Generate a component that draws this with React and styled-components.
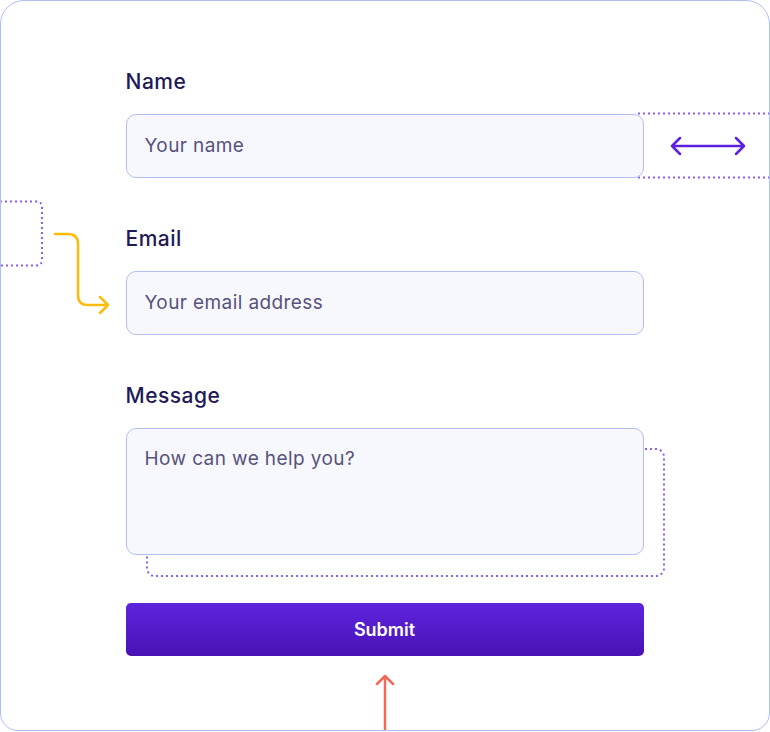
import React from 'react';
import styled, { createGlobalStyle } from 'styled-components';

const GlobalStyle = createGlobalStyle`
	html, body {
		margin: 0;
		padding: 0;
		background: #ffffff;
	}
	* {
		box-sizing: border-box;
	}
`;

const Card = styled.div`
	position: relative;
	width: 770px;
	height: 731px;
	border: 1.5px solid #b0bdf4;
	border-radius: 24px 24px 18px 18px;
	overflow: hidden;
	background: #ffffff;
	padding: 68.5px 0 0 124.5px;
	font-family: Inter, "Liberation Sans", sans-serif;
`;

const Decorations = styled.svg`
	position: absolute;
	top: -1.5px;
	left: -1.5px;
	width: 770px;
	height: 731px;
	pointer-events: none;
	z-index: 0;
`;

const Form = styled.form`
	position: relative;
	z-index: 1;
	width: 518px;
	display: flex;
	flex-direction: column;
`;

const Field = styled.div`
	display: flex;
	flex-direction: column;
	gap: 20px;
	margin-bottom: ${props => props.last ? '48px' : '49px'};
`;

const Label = styled.label`
	font-size: 21px;
	line-height: 24px;
	font-weight: 500;
	color: #221a57;
	letter-spacing: 0.5px;
`;

const fieldStyle = `
	width: 100%;
	border: 1.5px solid #b2bef4;
	border-radius: 10px;
	background: #f7f8fe;
	font-family: Inter, "Liberation Sans", sans-serif;
	font-size: 19px;
	letter-spacing: 0.4px;
	color: #221a57;
	outline: none;
	&::placeholder {
		color: #57527c;
		opacity: 1;
	}
`;

const Input = styled.input`
	${fieldStyle}
	height: 64px;
	padding: 0 18px;
`;

const TextArea = styled.textarea`
	${fieldStyle}
	height: 127px;
	padding: 18px 18px;
	line-height: 24px;
	resize: none;
	display: block;
`;

const SubmitButton = styled.button`
	width: 100%;
	height: 53px;
	border: none;
	border-radius: 5px;
	background: linear-gradient(180deg, #5e24de 0%, #4812b5 100%);
	color: #ffffff;
	font-family: Inter, "Liberation Sans", sans-serif;
	font-size: 18px;
	font-weight: 600;
	cursor: pointer;
`;

const DOTS = '2 3';
const DOT_COLOR = '#8a5ff0';

const App = () => {
	return (
		<>
			<GlobalStyle />
			<Card>
				<Decorations viewBox="0 0 770 731">
					{/* dotted guide right of the name field */}
					<path d="M638 113.5 H770 M638 177.5 H770" fill="none" stroke={DOT_COLOR} strokeWidth="2" strokeDasharray={DOTS} />
					{/* width arrow */}
					<path d="M672 146 H744 M680 138 L672 146 L680 154 M736 138 L744 146 L736 154" fill="none" stroke="#5b21db" strokeWidth="2.5" strokeLinecap="round" strokeLinejoin="round" />
					{/* dotted box on the left */}
					<path d="M0 201.5 H36 Q42 201.5 42 207.5 V259.5 Q42 265.5 36 265.5 H0" fill="none" stroke={DOT_COLOR} strokeWidth="2" strokeDasharray={DOTS} />
					{/* yellow arrow into email */}
					<path d="M55 234 H68 Q78 234 78 244 V295 Q78 305 88 305 H108 M100 297 L108 305 L100 313" fill="none" stroke="#fbbc0a" strokeWidth="2.5" strokeLinecap="round" strokeLinejoin="round" />
					{/* dotted shadow behind the message box */}
					<rect x="147" y="449" width="517" height="127" rx="8" fill="none" stroke={DOT_COLOR} strokeWidth="2" strokeDasharray={DOTS} />
					{/* red arrow up to submit */}
					<path d="M385 731 V676 M377 684 L385 676 L393 684" fill="none" stroke="#f06a58" strokeWidth="2.5" strokeLinecap="round" strokeLinejoin="round" />
				</Decorations>
				<Form onSubmit={e => e.preventDefault()}>
					<Field>
						<Label htmlFor="name">Name</Label>
						<Input id="name" type="text" placeholder="Your name" />
					</Field>
					<Field>
						<Label htmlFor="email">Email</Label>
						<Input id="email" type="email" placeholder="Your email address" />
					</Field>
					<Field last>
						<Label htmlFor="message">Message</Label>
						<TextArea id="message" placeholder="How can we help you?" />
					</Field>
					<SubmitButton type="submit">Submit</SubmitButton>
				</Form>
			</Card>
		</>
	);
};

export default App;
